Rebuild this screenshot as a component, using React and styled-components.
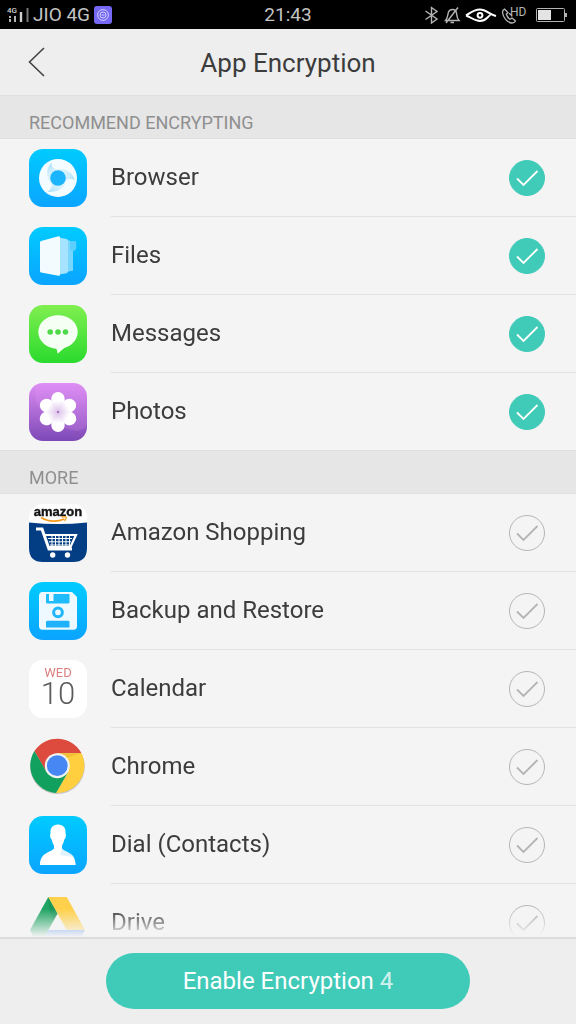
import styled, { createGlobalStyle } from "styled-components"
import { useState } from "react"

const GlobalStyle = createGlobalStyle`
  * {
    box-sizing: border-box;
  }
  body {
    margin: 0;
    background-color: #f4f4f4;
    color: #3c3c3c;
    font-family: Roboto, "Noto Sans", sans-serif;
  }
`
const Screen = styled.div`
  display: flex;
  flex-direction: column;
  height: 100vh;
`
const StatusBar = styled.div`
  display: grid;
  grid-template-columns: 1fr auto 1fr;
  align-items: center;
  flex-shrink: 0;
  height: 29px;
  padding: 0 7px;
  background-color: #000;
  color: #c4c4c4;
  font-size: 19px;
  line-height: 28px;
`
const StatusGroup = styled.div`
  display: flex;
  align-items: center;
  justify-content: ${({ $end }) => ($end ? "flex-end" : "flex-start")};
  gap: 4px;
`
const StatusIcon = styled.svg`
  display: block;
  flex-shrink: 0;
  fill: none;
  stroke: #b4b4b4;
`
const Header = styled.header`
  display: grid;
  grid-template-columns: 72px 1fr 72px;
  align-items: center;
  flex-shrink: 0;
  height: 66px;
  background-color: #eee;
`
const BackButton = styled.button`
  display: flex;
  align-items: center;
  height: 66px;
  padding: 0 0 0 28px;
  border: 0;
  background: none;
  cursor: pointer;
`
const Title = styled.h1`
  margin: 0;
  padding-top: 2px;
  font-size: 26px;
  font-weight: 400;
  line-height: 32px;
  text-align: center;
`
const AppList = styled.main`
  flex: 1;
  min-height: 0;
  overflow-y: auto;
  scrollbar-width: none;
  mask-image: linear-gradient(to top, transparent 0, #000 28px);
`
const SectionTitle = styled.h2`
  height: 44px;
  margin: 0;
  padding: 16px 29px 0;
  border-top: 1px solid #dfdfdf;
  border-bottom: 1px solid #e0e0e0;
  background-color: #e6e6e6;
  color: #8f8f8f;
  font-size: 18px;
  font-weight: 400;
  line-height: 22px;
`
const Rows = styled.ul`
  margin: 0;
  padding: 0;
  list-style: none;
`
const Row = styled.li`
  padding-left: 29px;
`
const RowLabel = styled.label`
  display: flex;
  align-items: center;
  gap: 24px;
  cursor: pointer;
`
const RowBody = styled.span`
  display: flex;
  flex: 1;
  align-items: center;
  justify-content: space-between;
  padding-right: 31px;
  border-bottom: 1px solid #e2e2e2;
  font-size: 24px;
  line-height: 77px;
  ${Row}:last-child & {
    border-bottom: 0;
  }
`
const AppIcon = styled.svg`
  display: block;
  flex-shrink: 0;
  width: 58px;
  height: 58px;
`
const CheckMark = styled.span`
  display: grid;
  width: 36px;
  height: 36px;
  & > * {
    grid-area: 1 / 1;
  }
`
const CheckInput = styled.input`
  width: 36px;
  height: 36px;
  margin: 0;
  appearance: none;
  border: 1px solid #b4b4b4;
  border-radius: 50%;
  cursor: pointer;
  &:checked {
    border-color: #40cab8;
    background-color: #40cab8;
  }
`
const CheckTick = styled.svg`
  pointer-events: none;
  fill: none;
  stroke: ${({ $on }) => ($on ? "#fff" : "#b4b4b4")};
  stroke-width: 1.8;
`
const Footer = styled.footer`
  display: flex;
  justify-content: center;
  flex-shrink: 0;
  padding: 14px 0 15px;
  border-top: 2px solid #dcdcdc;
  background-color: #eee;
`
const EnableButton = styled.button`
  width: 63.2%;
  height: 56px;
  border: 0;
  border-radius: 28px;
  background-color: #40cab8;
  color: #fff;
  font-family: inherit;
  font-size: 24px;
  cursor: pointer;
`
const Count = styled.span`
  opacity: 0.75;
`

const Gradient = ({ id, from, to }) => (
  <defs>
    <linearGradient id={id} x1="0" y1="0" x2="0" y2="1">
      <stop offset="0" stopColor={from} />
      <stop offset="1" stopColor={to} />
    </linearGradient>
  </defs>
)

const Tile = ({ id, from, to, children }) => (
  <AppIcon viewBox="0 0 58 58" aria-hidden="true">
    <Gradient id={id} from={from} to={to} />
    <rect width="58" height="58" rx="14" fill={`url(#${id})`} />
    {children}
  </AppIcon>
)

const BrowserIcon = () => (
  <Tile id="browser" from="#00cbff" to="#0ba4ff">
    <defs>
      <linearGradient id="swirl" x1="0" y1="0" x2="0.3" y2="1">
        <stop offset="0" stopColor="#8ad4f5" stopOpacity="0.75" />
        <stop offset="1" stopColor="#c8ecfb" stopOpacity="0.15" />
      </linearGradient>
    </defs>
    <circle cx="29" cy="29" r="19" fill="#f5fcff" />
    {[0, 120, 240].map(angle => (
      <path
        key={angle}
        d="M22.5 13C15.5 21 17 33 26 38L29 36.500A7.800 7.800 0 0 1 29 21C25 20.500 22.500 18 22.500 13Z"
        fill="url(#swirl)"
        transform={`rotate(${angle} 29 29)`}
      />
    ))}
    <circle cx="29" cy="29" r="7.8" fill="#1cb5fc" />
  </Tile>
)

const FilesIcon = () => (
  <Tile id="files" from="#00cbff" to="#0ba4ff">
    <path d="M39 14H46.5Q47.5 14 47.2 16V21Q47 23.5 44 24.5V43Q44 44 42 44H39Z" fill="#5bd0ff" />
    <path d="M37 13L41 13.5V22L44 24.5V43.5L38 45Z" fill="#78d6ff" />
    <path d="M30 10.5L37.5 12Q39 12.3 39 13.5V44.5Q39 45.8 37.5 46.2L30 47.5Z" fill="#a6e3ff" />
    <path d="M12 14L29.5 9.2Q31 9 31 10.5V47.5Q31 49 29.5 48.7L12 45.5Q11 45.3 11 44V15.3Q11 14.3 12 14Z" fill="#f3fbff" />
  </Tile>
)

const MessagesIcon = () => (
  <Tile id="messages" from="#80ef50" to="#2ada2e">
    <ellipse cx="29" cy="27" rx="19.7" ry="16.8" fill="#f6fff4" />
    <path d="M26 42C28 44 28.2 46 28.3 47.8Q28.6 48.8 29.5 48C32 45.8 34.5 43.5 38 41Z" fill="#f6fff4" />
    <g fill="#4fd84a">
      <circle cx="21.2" cy="27" r="2.8" />
      <circle cx="29" cy="27" r="2.8" />
      <circle cx="36.5" cy="27" r="2.8" />
    </g>
  </Tile>
)

const PhotosIcon = () => (
  <Tile id="photos" from="#dd8cf4" to="#7d49b6">
    <path d="M6 4C4 22 16 42 48 48Q58 46 58 40V14Q58 0 44 0H14Q9 0 6 4Z" fill="#e79bfa" opacity="0.18" />
    <defs>
      <linearGradient id="petal" x1="0" y1="0" x2="0" y2="1">
        <stop offset="0.45" stopColor="#fff" />
        <stop offset="1" stopColor="#dcc0ea" />
      </linearGradient>
    </defs>
    {[0, 60, 120, 180, 240, 300].map(angle => (
      <path
        key={angle}
        d="M29 29C26 25 22.300 20.500 22.300 15.700A6.700 6.700 0 0 1 35.700 15.700C35.700 20.500 32 25 29 29Z"
        fill="url(#petal)"
        transform={`rotate(${angle} 29 29)`}
      />
    ))}
    <circle cx="29" cy="29" r="1" fill="#8a55b5" />
  </Tile>
)

const AmazonIcon = () => (
  <Tile id="amazon" from="#fff" to="#fff">
    <path d="M0 18.5Q29 21.5 58 18.5V44Q58 58 44 58H14Q0 58 0 44Z" fill="#033e84" />
    <text x="29" y="12" textAnchor="middle" fontFamily="Liberation Sans, sans-serif" fontWeight="700" fontSize="13" fill="#141414" stroke="#141414" strokeWidth="0.4">amazon</text>
    <path d="M12 13.5Q23 20 35.5 15" fill="none" stroke="#f79a1c" strokeWidth="1.7" />
    <path d="M32.5 13.2Q36.5 12.2 37.3 13.2Q37.4 15 35.6 17.2" fill="none" stroke="#f79a1c" strokeWidth="1.2" />
    <g fill="none" stroke="#fff">
      <path d="M7 25H13L20 45H43" strokeWidth="3" />
      <path d="M15 31H47L41.5 43H20" strokeWidth="2.2" />
      <path d="M19 34.5H43M20 37.8H42M21 41H41M23 30V43M26.5 30V43M30 30V43M33.5 30V43M37 30V43M40.5 30V42" strokeWidth="1" />
    </g>
    <circle cx="23.7" cy="51" r="2.7" fill="#fff" />
    <circle cx="38.5" cy="51" r="2.7" fill="#fff" />
  </Tile>
)

const BackupIcon = () => (
  <Tile id="backup" from="#00cbff" to="#0ba4ff">
    <path d="M13.5 10H43L48 15V44Q48 47.8 44.5 47.8H13.5Q10 47.8 10 44V14Q10 10 13.5 10Z" fill="#edf9ff" />
    <path d="M17 12H20V19H24.5V12H40.5V20.3Q40.5 21.6 39 21.6H18.5Q17 21.6 17 20.3Z" fill="#20bbfb" />
    <circle cx="29" cy="30.3" r="4.4" fill="none" stroke="#22b7fb" strokeWidth="3" />
    <path d="M18.5 38.7H39Q40.5 38.7 40.5 40V45.5H17V40Q17 38.7 18.5 38.7Z" fill="#20b1fb" />
  </Tile>
)

const CalendarIcon = () => (
  <Tile id="calendar" from="#fff" to="#fff">
    <text x="29" y="17" textAnchor="middle" fontSize="13" fill="#dc7f7f">WED</text>
    <text x="29" y="44" textAnchor="middle" fontSize="31" fontWeight="300" fill="#5c5c5c">10</text>
  </Tile>
)

const ChromeIcon = () => (
  <AppIcon viewBox="0 0 58 58" aria-hidden="true">
    <circle cx="28.4" cy="28.6" r="27.4" fill="#c4c4c4" />
    <path d="M5.4 13A27.5 27.5 0 0 1 52.5 15.2H28.3L17.5 34Z" fill="#dc4b3e" />
    <path d="M52.5 15.2A27.5 27.5 0 0 1 27 54.9L39.1 34L28.3 15.2Z" fill="#ffcf40" />
    <path d="M27 54.9A27.5 27.5 0 0 1 5.4 13L17.5 34L39.1 34Z" fill="#11a05e" />
    <path d="M28.3 15.2H52L38.5 19.5Z" fill="#e9b62f" opacity="0.6" />
    <circle cx="28.3" cy="27.7" r="12.5" fill="#f3f3f3" />
    <circle cx="28.3" cy="27.7" r="10.4" fill="#4687f4" />
  </AppIcon>
)

const ContactsIcon = () => (
  <Tile id="contacts" from="#00cbff" to="#0ba4ff">
    <path d="M29 8.5C34.5 8.5 37 12 36.5 17.5C37.5 19 36.8 22 35.3 23.5C34.8 26 34 28 33 29.5V32.5C36 36.5 46.5 36 46.7 49H11C11.2 36 22 36.5 25 32.5V29.5C24 28 23.2 26 22.7 23.5C21.2 22 20.5 19 21.5 17.5C21 12 23.5 8.5 29 8.5Z" fill="#fff" />
    <path d="M33 32.5C36 36.5 42 36 45 41L31 39Q32 37 33 32.5Z" fill="#bfe6ff" opacity="0.5" />
  </Tile>
)

const DriveIcon = () => (
  <AppIcon viewBox="0 0 58 58" aria-hidden="true">
    <path d="M19.3 3L1 36L10 53L28.7 19.3Z" fill="#1fa463" />
    <path d="M19.3 3L28.7 19.3L24 27L20.5 17Z" fill="#178a50" opacity="0.5" />
    <path d="M19.3 3H37.7L56 36H37.7Z" fill="#ffd04b" />
    <path d="M56 36L47 53H10L19.500 36Z" fill="#4687f4" />
  </AppIcon>
)

const sections = [
  {
    title: "RECOMMEND ENCRYPTING",
    apps: [
      { name: "Browser", Icon: BrowserIcon },
      { name: "Files", Icon: FilesIcon },
      { name: "Messages", Icon: MessagesIcon },
      { name: "Photos", Icon: PhotosIcon },
    ],
  },
  {
    title: "MORE",
    apps: [
      { name: "Amazon Shopping", Icon: AmazonIcon },
      { name: "Backup and Restore", Icon: BackupIcon },
      { name: "Calendar", Icon: CalendarIcon },
      { name: "Chrome", Icon: ChromeIcon },
      { name: "Dial (Contacts)", Icon: ContactsIcon },
      { name: "Drive", Icon: DriveIcon },
    ],
  },
]

const PhoneStatus = () => (
  <StatusBar>
    <StatusGroup>
      <StatusIcon width="22" height="18" viewBox="0 0 22 18">
        <text x="0" y="7" fontSize="8" fontWeight="500" fill="#d0d0d0" stroke="none">4G</text>
        <path d="M3 13V16M3 10V12" strokeWidth="2" />
        <path d="M8 10V16" strokeWidth="2" />
        <path d="M14 6V16" strokeWidth="2.4" stroke="#d0d0d0" />
        <path d="M20.5 2V16" strokeWidth="2" stroke="#777" />
      </StatusIcon>
      <span>JIO 4G</span>
      <StatusIcon width="18" height="18" viewBox="0 0 18 18">
        <rect width="18" height="18" rx="3" fill="#7468f5" stroke="none" />
        <circle cx="9" cy="9" r="5.4" stroke="#d3cfff" />
        <circle cx="9" cy="9" r="3" stroke="#d3cfff" />
        <path d="M7.5 9H10.5" stroke="#d3cfff" />
      </StatusIcon>
    </StatusGroup>
    <span>21:43</span>
    <StatusGroup $end>
      <StatusIcon width="15" height="18" viewBox="0 0 15 18" strokeWidth="1.4">
        <path d="M1.5 5L13 13L7.5 17V1.5L13 5.5L1.5 13.5" />
      </StatusIcon>
      <StatusIcon width="18" height="18" viewBox="0 0 18 18" strokeWidth="1.4">
        <path d="M2.5 14.5C5 12 4.5 9 5.5 6Q6.5 3.500 9.500 3.500Q13 3.500 13.500 7C14 10.500 14 12.500 16 14.500ZM7.500 16.500H11M15 1.500L3 17" />
      </StatusIcon>
      <StatusIcon width="32" height="18" viewBox="0 0 32 18">
        <path d="M1 9.5C5 7 9 3.5 15 3.5C21 3.5 24 8 31 10M1 9.5C6 11 9 15 15 15C21 15 22 11 25.5 9" stroke="#fff" strokeWidth="2" />
        <circle cx="15" cy="9.3" r="2.4" stroke="#fff" strokeWidth="2" />
      </StatusIcon>
      <StatusIcon width="26" height="20" viewBox="0 0 26 20" strokeWidth="1.3">
        <path d="M3.500 4Q1.500 5 1.500 7.500C2 12.500 6.500 18 11 18Q13.500 18 14.500 16L11 13L9 14.300C7 13 5.800 11 5.300 9.300L7 7.700Z" />
        <path d="M8 8.500Q10.500 9 11 11.500" />
        <text x="9" y="11" fontSize="12" fill="#b4b4b4" stroke="none">HD</text>
      </StatusIcon>
      <StatusIcon width="38" height="18" viewBox="0 0 38 18">
        <rect x="5.5" y="2.5" width="28" height="13" rx="1" />
        <rect x="7" y="4" width="13" height="10" fill="#e4e4e4" stroke="none" />
        <path d="M35 7V11" strokeWidth="2" />
      </StatusIcon>
    </StatusGroup>
  </StatusBar>
)

const AppRow = ({ name, Icon, checked, onToggle }) => (
  <Row>
    <RowLabel>
      <Icon />
      <RowBody>
        {name}
        <CheckMark>
          <CheckInput type="checkbox" checked={checked} onChange={() => onToggle(name)} />
          <CheckTick $on={checked} viewBox="0 0 36 36" aria-hidden="true">
            <path d="M8 18.5L14.5 25L28.5 11" />
          </CheckTick>
        </CheckMark>
      </RowBody>
    </RowLabel>
  </Row>
)

const App = () => {
  const [encrypted, setEncrypted] = useState(["Browser", "Files", "Messages", "Photos"])

  function handleToggle(name) {
    setEncrypted(
      encrypted.includes(name)
        ? encrypted.filter(item => item !== name)
        : [...encrypted, name]
    )
  }

  return (
    <>
      <GlobalStyle />
      <Screen>
        <PhoneStatus />
        <Header>
          <BackButton type="button" aria-label="Back">
            <svg width="18" height="30" viewBox="0 0 18 30" fill="none" stroke="#444" strokeWidth="1.6">
              <path d="M16 1L1.5 15L16 29" />
            </svg>
          </BackButton>
          <Title>App Encryption</Title>
        </Header>
        <AppList>
          {sections.map(section => (
            <section key={section.title}>
              <SectionTitle>{section.title}</SectionTitle>
              <Rows>
                {section.apps.map(app => (
                  <AppRow
                    key={app.name}
                    name={app.name}
                    Icon={app.Icon}
                    checked={encrypted.includes(app.name)}
                    onToggle={handleToggle}
                  />
                ))}
              </Rows>
            </section>
          ))}
        </AppList>
        <Footer>
          <EnableButton type="button">
            Enable Encryption <Count>{encrypted.length}</Count>
          </EnableButton>
        </Footer>
      </Screen>
    </>
  )
}

export default App
